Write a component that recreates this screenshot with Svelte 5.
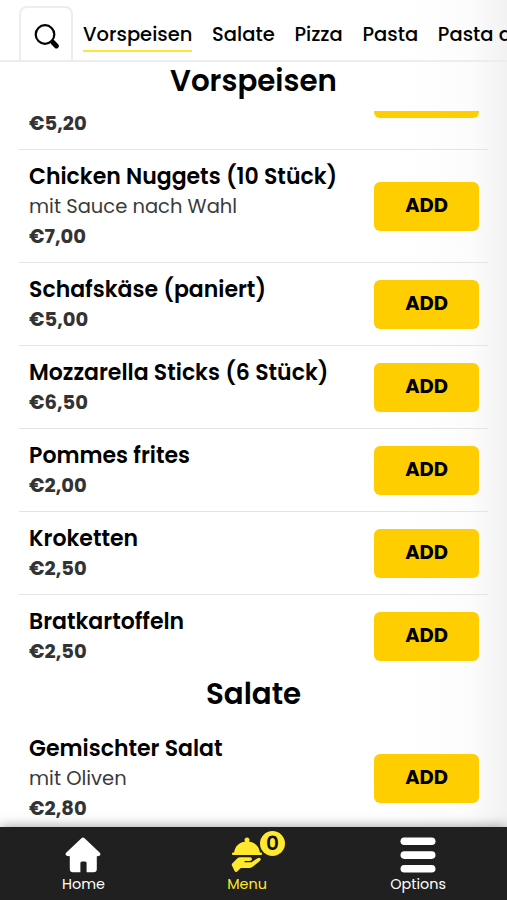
<script lang="ts">
  type Dish = { name: string; note?: string; price: string };

  const categories = ['Vorspeisen', 'Salate', 'Pizza', 'Pasta', 'Pasta al Forno'];

  const starters: Dish[] = [
    { name: '', note: '', price: '€5,20' },
    { name: 'Chicken Nuggets (10 Stück)', note: 'mit Sauce nach Wahl', price: '€7,00' },
    { name: 'Schafskäse (paniert)', price: '€5,00' },
    { name: 'Mozzarella Sticks (6 Stück)', price: '€6,50' },
    { name: 'Pommes frites', price: '€2,00' },
    { name: 'Kroketten', price: '€2,50' },
    { name: 'Bratkartoffeln', price: '€2,50' }
  ];

  const salads: Dish[] = [{ name: 'Gemischter Salat', note: 'mit Oliven', price: '€2,80' }];

  let active = $state('Vorspeisen');
  let count = $state(0);
</script>

{#snippet row(dish: Dish)}
  <li class="dish">
    <div class="info">
      <h3>{dish.name}</h3>
      {#if dish.note !== undefined}
        <p class="note">{dish.note}</p>
      {/if}
      <p class="price">{dish.price}</p>
    </div>
    <button class="add" onclick={() => count++}>{dish.name ? 'ADD' : ''}</button>
  </li>
{/snippet}

<div class="screen">
  <header>
    <button class="search" aria-label="Suche">
      <svg width="26" height="26" viewBox="0 0 26 26">
        <circle cx="11" cy="10.5" r="9.3" fill="none" stroke="#000" stroke-width="2.2" />
        <path d="M17.3 16.8l1.5 1.5" stroke="#000" stroke-width="2.4" />
        <path d="M18.8 18.3l3.6 3.6" stroke="#000" stroke-width="5" stroke-linecap="round" />
      </svg>
    </button>
    <nav class="tabs">
      {#each categories as category}
        <button class="tab" class:active={active === category} onclick={() => (active = category)}>{category}</button>
      {/each}
    </nav>
  </header>

  <h2 class="current">Vorspeisen</h2>

  <main>
    <ul class="scrolled">
      {#each starters as dish}
        {@render row(dish)}
      {/each}
    </ul>
    <h2>Salate</h2>
    <ul>
      {#each salads as dish}
        {@render row(dish)}
      {/each}
    </ul>
  </main>

  <footer>
    <a class="home" href="#home">
      <svg width="36" height="36" viewBox="0 0 36 36" fill="#fff">
        <path d="M16.2 1.4q1.8-1.6 3.6 0L34.6 15.6q1.2 1.2.6 2.4-.6 1.3-3.4 1.3V32q0 3.2-3.2 3.2h-7V26q0-1.5-1.5-1.5h-3.2q-1.5 0-1.5 1.5v9.2H8Q4.8 35.2 4.8 32V19.3Q1.4 19.3.8 18q-.6-1.2.6-2.4z" />
      </svg>
      <span>Home</span>
    </a>
    <a class="menu" href="#menu">
      <div class="tray">
        <svg width="32" height="36" viewBox="0 0 32 36" fill="#ffe92e">
          <circle cx="16" cy="3" r="2.5" />
          <path d="M3 16.5C3.5 9 8.8 4.6 16 4.6S28.5 9 29 16.5z" />
          <rect x="1" y="15.5" width="30" height="2.6" rx="1" />
          <path d="M1 26.8L6.2 21.4Q7.5 20.3 9.2 20.3H19Q21 20.4 21 22T19 23.9H13.5V25.300H20.500L26.500 21.200Q28.600 20 29.500 21.400T28.500 24.200L22 29.600Q20.500 30.900 18.500 30.900H9.800L6 34.800Q4.500 35.500 3.600 34L.9 28.500Q.6 27.500 1 26.800z" />
        </svg>
        <span class="badge">{count}</span>
      </div>
      <span>Menu</span>
    </a>
    <a class="options" href="#options">
      <svg width="36" height="36" viewBox="0 0 36 36" fill="#fff">
        <rect x="0.5" y="0.5" width="35" height="7.6" rx="3.8" />
        <rect x="0.5" y="14.3" width="35" height="7.6" rx="3.8" />
        <rect x="0.5" y="28" width="35" height="7.6" rx="3.8" />
      </svg>
      <span>Options</span>
    </a>
  </footer>
</div>

<style>
  :global(body) {
    margin: 0;
    background: #fff;
  }

  .screen {
    display: flex;
    flex-direction: column;
    width: 507px;
    height: 900px;
    overflow: hidden;
    font-family: Poppins, Inter, 'Open Sans', sans-serif;
    color: #000;
    background: linear-gradient(90deg, #fff 400px, #fcfcfc 470px, #f2f2f2 507px);
  }

  button {
    font: inherit;
    color: inherit;
    border: none;
    background: none;
    padding: 0;
    cursor: pointer;
  }

  h2,
  h3,
  p,
  ul {
    margin: 0;
    padding: 0;
    font-weight: inherit;
    list-style: none;
  }

  header {
    display: flex;
    flex: none;
    box-sizing: border-box;
    height: 62px;
    padding: 6px 0 0 19px;
    border-bottom: 2px solid #ededed;
  }

  .search {
    flex: none;
    box-sizing: border-box;
    width: 54px;
    padding: 5px 0 0 1px;
    border: 2px solid #ededed;
    border-bottom: none;
    border-radius: 8px 8px 0 0;
  }

  .search svg {
    display: block;
    margin: 0 auto;
  }

  .tabs {
    display: flex;
    gap: 19.7px;
    padding: 13px 0 0 10px;
    align-items: flex-start;
    white-space: nowrap;
  }

  .tab {
    height: 33px;
    padding-bottom: 2px;
    box-sizing: border-box;
    line-height: 31px;
    font-size: 19.5px;
    font-weight: 500;
    border-bottom: 2px solid transparent;
  }

  .tab.active {
    border-color: #ffe633;
  }

  h2 {
    flex: none;
    height: 44px;
    line-height: 32px;
    font-size: 29.3px;
    font-weight: 600;
    text-align: center;
  }

  .current {
    padding-top: 3px;
    height: 46px;
  }

  main {
    flex: 1;
    min-height: 0;
    overflow: hidden;
  }

  ul {
    padding: 0 19px;
  }

  .scrolled {
    margin-top: -74.5px;
  }

  .dish {
    display: flex;
    align-items: center;
    justify-content: space-between;
    padding: 12px 9px 11px 10px;
    border-bottom: 1px solid #e4e4e4;
  }

  .dish:last-child {
    border-bottom-color: transparent;
  }

  h3 {
    height: 30px;
    line-height: 30px;
    font-size: 22px;
    font-weight: 600;
  }

  .note {
    height: 30px;
    line-height: 30px;
    font-size: 19.5px;
    color: #3a3a3a;
  }

  .price {
    height: 29px;
    line-height: 29px;
    font-size: 19.5px;
    font-weight: 700;
    color: #333;
  }

  .add {
    flex: none;
    width: 105px;
    height: 49px;
    padding-bottom: 1px;
    border-radius: 6px;
    background: #ffce00;
    font-size: 19.5px;
    font-weight: 700;
  }

  footer {
    position: relative;
    display: flex;
    flex: none;
    justify-content: space-between;
    box-sizing: border-box;
    height: 73px;
    padding: 10px 61px 0 62px;
    background: #202020;
    box-shadow: 0 0 12px rgba(0, 0, 0, 0.4);
  }

  footer a {
    display: flex;
    flex-direction: column;
    align-items: center;
    font-size: 14.4px;
    line-height: 22px;
    color: #fff;
    text-decoration: none;
  }

  footer svg {
    display: block;
  }

  footer .menu {
    margin-left: -1px;
    color: #ffe92e;
  }

  .tray {
    position: relative;
  }

  .badge {
    position: absolute;
    left: 29px;
    top: -6px;
    width: 25px;
    height: 25px;
    border-radius: 50%;
    background: #ffe92e;
    color: #111;
    font-size: 20px;
    font-weight: 600;
    line-height: 25px;
    text-align: center;
  }
</style>
